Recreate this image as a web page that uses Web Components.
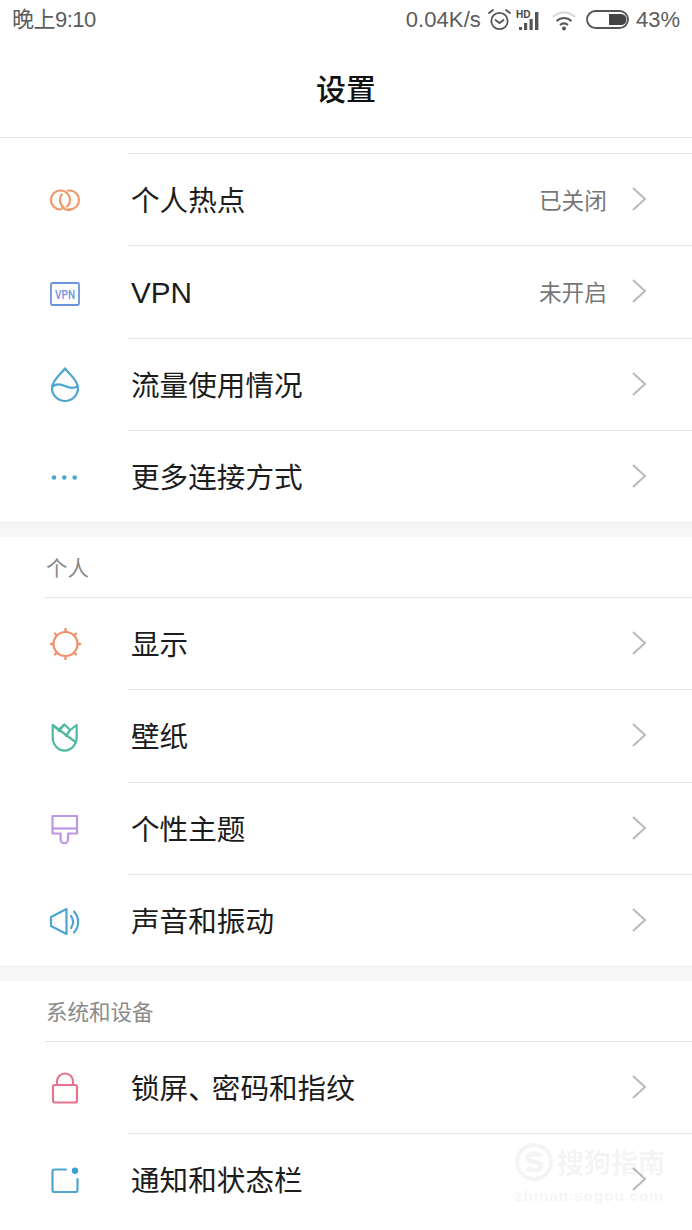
<!DOCTYPE html>
<html lang="zh">
<head>
<meta charset="utf-8">
<title>设置</title>
<style>
  html, body { margin: 0; padding: 0; background: #fff; }
  body { width: 692px; height: 1230px; overflow: hidden; font-family: "Noto Sans CJK SC", "Noto Sans", sans-serif; position: relative; }
</style>
</head>
<body>
<status-bar></status-bar>
<title-bar>设置</title-bar>
<setting-group top>
  <setting-row label="个人热点" value="已关闭" icon="hotspot"></setting-row>
  <setting-row label="VPN" value="未开启" icon="vpn"></setting-row>
  <setting-row label="流量使用情况" icon="drop"></setting-row>
  <setting-row label="更多连接方式" icon="more"></setting-row>
</setting-group>
<setting-group title="个人">
  <setting-row label="显示" icon="sun"></setting-row>
  <setting-row label="壁纸" icon="tulip"></setting-row>
  <setting-row label="个性主题" icon="brush"></setting-row>
  <setting-row label="声音和振动" icon="sound"></setting-row>
</setting-group>
<setting-group title="系统和设备">
  <setting-row label="锁屏、密码和指纹" icon="lock"></setting-row>
  <setting-row label="通知和状态栏" icon="notice"></setting-row>
</setting-group>
<water-mark></water-mark>

<script>
// Icons, all drawn on a 30x30 box
const ICONS = {
  hotspot: `<g fill="none" stroke-width="2.200"><circle cx="19.500" cy="15" r="9.500" stroke="#ee9a6b"/><path d="M11 5.600A9.500 9.500 0 0 1 18 11" stroke="#fff" stroke-width="5"/><circle cx="10.500" cy="15" r="9.500" stroke="#ee9a6b"/><path d="M12 24.400A9.500 9.500 0 0 0 19 24.400" stroke="#fff" stroke-width="5"/><path d="M11.500 22A9.500 9.500 0 0 0 21 24.400" stroke="#ee9a6b"/></g>`,
  vpn: `<rect x="1" y="6" width="28" height="22" rx="1.500" fill="none" stroke="#6b93dc" stroke-width="1.800"/><text x="15" y="21.500" text-anchor="middle" font-family="Roboto, sans-serif" font-weight="500" font-size="12" textLength="20" lengthAdjust="spacingAndGlyphs" fill="#6b93dc">VPN</text>`,
  drop: `<g fill="none" stroke="#4ea5d0" stroke-width="2.200" stroke-linejoin="round"><path d="M15 -1.500C11 4 2 10 2 18a13 13 0 0 0 26 0C28 10 19 4 15 -1.500Z"/><path d="M2.300 16.500c4-3 8-2.800 12.700-.500s9 2.800 12.700 .200"/></g>`,
  more: `<g fill="#4ea5d0"><circle cx="4" cy="15.500" r="2.300"/><circle cx="14.300" cy="15.500" r="2.300"/><circle cx="24.700" cy="15.500" r="2.300"/></g>`,
  sun: `<circle cx="15.500" cy="15" r="12" fill="none" stroke="#f0906a" stroke-width="2.200"/><g stroke="#f0906a" stroke-width="2.400" stroke-linecap="round"><path d="M15.500 0v2M15.500 28v2M1 15h1.500M28.500 15h1.500M5 4.500l1.500 1.500M24.500 24l1.500 1.500M26 4.500l-1.500 1.500M6.500 24l-1.500 1.500"/></g>`,
  tulip: `<g fill="none" stroke="#4fb8a3" stroke-width="2.200" stroke-linejoin="round"><path d="M2.700 4l5.600 5 6-5.500 6 5.500 6.400-5v12c0 8-5.700 13.500-12 13.700C8 29.500 2.700 24 2.700 16Z"/><path d="M2.700 4 25.500 21M14.300 3.500 8.300 11M20.300 9l-5 6.500"/></g>`,
  brush: `<g fill="none" stroke="#bb97e6" stroke-width="2.200" stroke-linejoin="round"><path d="M2.500 2H27V19.500H18V25.500a3.700 3.700 0 0 1-7.400 0V19.500H2.500Z"/><path d="M2.500 14.500H27"/></g>`,
  sound: `<g fill="none" stroke="#4ea5d0" stroke-width="2.200" stroke-linejoin="round" stroke-linecap="round"><path d="M1 11 16.500 3v25L1 20Z"/><path d="M21 10c2.600 3.400 2.600 8 0 12"/><path d="M24 5.500c5.500 6 5.500 15 0 21"/></g>`,
  lock: `<g fill="none" stroke="#e4748d" stroke-width="2.200" stroke-linejoin="round"><rect x="3" y="12" width="24" height="17.500" rx="2"/><path d="M7 12V8.500a8 8 0 0 1 16 0V12"/></g>`,
  notice: `<path d="M16 4.500H4.500a2 2 0 0 0-2 2V25a2 2 0 0 0 2 2H25.500a2 2 0 0 0 2-2V14" fill="none" stroke="#4ea5d0" stroke-width="2.200" stroke-linecap="round"/><circle cx="25" cy="5.700" r="3.200" fill="#3c9fcf"/>`
};

class StatusBar extends HTMLElement {
  constructor() {
    super();
    this.attachShadow({ mode: 'open' });
    this.shadowRoot.innerHTML = `
      <style>
        :host { display: flex; align-items: center; justify-content: space-between; height: 40px; padding: 0 12px; color: #5c5c5c; font-size: 22px; font-family: "Liberation Sans", "Noto Sans CJK SC", sans-serif; }
        .right { display: flex; align-items: center; }
        .clock { letter-spacing: -.5px; margin-bottom: 3px; font-family: "Noto Sans CJK SC", "Liberation Sans", sans-serif; line-height: 30px; }
        svg { display: block; }
      </style>
      <span class="clock">晚上<span style="font-family:'Liberation Sans',sans-serif">9:10</span></span>
      <div class="right">
        <span style="letter-spacing:.1px">0.04K/s</span>
        <svg style="margin-left:7px" width="23" height="24" viewBox="0 0 23 24" fill="none" stroke="#555" stroke-width="1.800"><circle cx="11.500" cy="13" r="8.200"/><path d="M7.500 12l4 3 4-3" stroke-linecap="round"/><path d="M1 5l4-3M22 5l-4-3" stroke-linecap="round"/></svg>
        <svg style="margin-left:5px" width="25" height="24" viewBox="0 0 25 24"><text x="0" y="9.500" font-family="Liberation Sans, sans-serif" font-weight="700" font-size="10" fill="#444">HD</text><g fill="#555"><rect x="3" y="19" width="3" height="3"/><rect x="8" y="15" width="3.200" height="7"/><rect x="13.500" y="11" width="3.200" height="11"/><rect x="19" y="4" width="3.400" height="18"/></g></svg>
        <svg style="margin-left:11px" width="24" height="24" viewBox="0 0 24 24" fill="none"><path d="M1 9c6.500-6 15.500-6 22 0" stroke="#d5d5d5" stroke-width="2.200"/><path d="M4.500 13c4.500-4 10.500-4 15 0" stroke="#555" stroke-width="2.200"/><path d="M8 17c2.500-2 5.500-2 8 0" stroke="#555" stroke-width="2.200"/><circle cx="12" cy="20.500" r="2" fill="#555"/></svg>
        <svg style="margin-left:10px" width="43" height="20" viewBox="0 0 43 20"><rect x="1" y="1" width="41" height="17" rx="8.500" fill="none" stroke="#555" stroke-width="1.800"/><path d="M23 4h12a5.500 5.500 0 0 1 0 11H23Z" fill="#444"/></svg>
        <span style="margin-left:7px">43%</span>
      </div>`;
  }
}
customElements.define('status-bar', StatusBar);

class TitleBar extends HTMLElement {
  constructor() {
    super();
    this.attachShadow({ mode: 'open' });
    this.shadowRoot.innerHTML = `
      <style>
        :host { display: flex; align-items: center; justify-content: center; box-sizing: border-box; height: 98px; padding-bottom: 4px; border-bottom: 1px solid #e3e3e3; color: #111; font-size: 30px; font-weight: 500; }
      </style>
      <slot></slot>`;
  }
}
customElements.define('title-bar', TitleBar);

class SettingGroup extends HTMLElement {
  constructor() {
    super();
    this.attachShadow({ mode: 'open' });
  }
  connectedCallback() {
    const title = this.getAttribute('title');
    this.shadowRoot.innerHTML = `
      <style>
        :host { display: block; }
        :host([top]) { padding-top: 15px; }
        .gap { height: 14px; background: #f6f6f6; border-top: 1px solid #ececec; }
        .head { box-sizing: border-box; height: 61px; margin-left: 45px; padding-bottom: 1px; display: flex; align-items: center; border-bottom: 1px solid #e6e6e6; color: #8a8a8a; font-size: 21.500px; }
        .head + slot::slotted(setting-row:first-of-type) { margin-top: -1px; }
      </style>
      ${title ? `<div class="gap"></div><div class="head"><span style="margin-left:1px">${title}</span></div>` : ''}
      <slot></slot>`;
  }
}
customElements.define('setting-group', SettingGroup);

class SettingRow extends HTMLElement {
  constructor() {
    super();
    this.attachShadow({ mode: 'open' });
  }
  connectedCallback() {
    const value = this.getAttribute('value');
    const name = this.getAttribute('label');
    const label = name.replace('、', '<span style="letter-spacing:-5px">、</span>');
    this.shadowRoot.innerHTML = `
      <style>
        :host { display: flex; box-sizing: border-box; height: 92.250px; align-items: stretch; }
        .icon { width: 128px; flex: none; display: flex; align-items: center; padding: 2px 0 0 50px; box-sizing: border-box; }
        .icon svg { display: block; overflow: visible; }
        .body { flex: 1; display: flex; align-items: center; border-top: 1px solid #e6e6e6; padding: 0 45px 1px 0; }
        .label { flex: 1; margin-left: 3px; color: #1c1c1c; font-size: 28.600px; line-height: 40px; }
        .label.latin { font-family: "Liberation Sans", sans-serif; font-size: 29.700px; padding-top: 4px; }
        .value { color: #777; font-size: 22.700px; margin-right: 24px; }
        .chev { display: block; }
      </style>
      <div class="icon"><svg width="30" height="30" viewBox="0 0 30 30">${ICONS[this.getAttribute('icon')] || ''}</svg></div>
      <div class="body">
        <span class="label${/^[A-Z]+$/.test(name) ? ' latin' : ''}">${label}</span>
        ${value ? `<span class="value">${value}</span>` : ''}
        <svg class="chev" width="16" height="26" viewBox="0 0 16 26" fill="none" stroke="#b9b9b9" stroke-width="2"><path d="M2 2l12 11L2 24"/></svg>
      </div>`;
  }
}
customElements.define('setting-row', SettingRow);

// Faint stamp in the lower right corner, it lies over the list
class WaterMark extends HTMLElement {
  constructor() {
    super();
    this.attachShadow({ mode: 'open' });
    this.shadowRoot.innerHTML = `
      <style>
        :host { position: absolute; left: 514px; top: 1142px; width: 156px; color: #000; opacity: .04; filter: blur(.6px); pointer-events: none; }
        .top { display: flex; align-items: center; gap: 3px; font-size: 27px; line-height: 40px; font-weight: 700; white-space: nowrap; }
        .url { font: 700 15.500px "Liberation Sans", sans-serif; letter-spacing: .8px; margin-top: 5px; margin-left: 1px; white-space: nowrap; }
      </style>
      <div class="top">
        <svg width="40" height="40" viewBox="0 0 40 40" fill="none" stroke="#000" stroke-width="4"><circle cx="20" cy="20" r="17"/><path d="M27 14c-3-3-13-3-13 2s13 3 13 8-11 5-14 2" stroke-width="5"/></svg>
        <span>搜狗指南</span>
      </div>
      <div class="url">zhinan.sogou.com</div>`;
  }
}
customElements.define('water-mark', WaterMark);
</script>
</body>
</html>
